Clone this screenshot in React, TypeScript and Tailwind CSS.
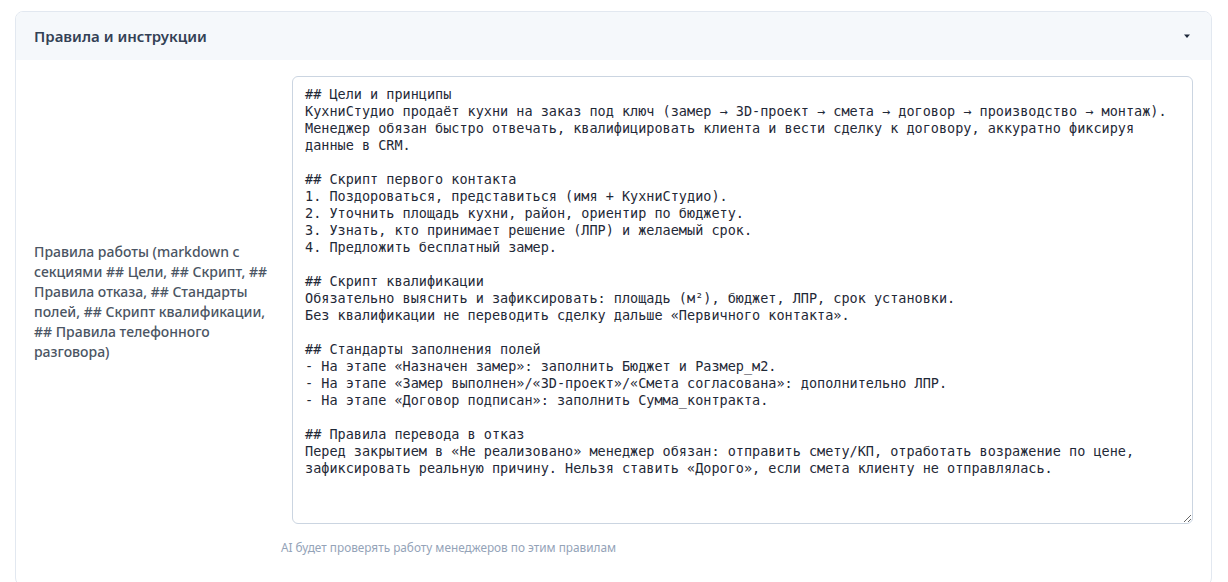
import React from "react";

const RULES = `## Цели и принципы
КухниСтудио продаёт кухни на заказ под ключ (замер → 3D-проект → смета → договор → производство → монтаж).
Менеджер обязан быстро отвечать, квалифицировать клиента и вести сделку к договору, аккуратно фиксируя
данные в CRM.

## Скрипт первого контакта
1. Поздороваться, представиться (имя + КухниСтудио).
2. Уточнить площадь кухни, район, ориентир по бюджету.
3. Узнать, кто принимает решение (ЛПР) и желаемый срок.
4. Предложить бесплатный замер.

## Скрипт квалификации
Обязательно выяснить и зафиксировать: площадь (м²), бюджет, ЛПР, срок установки.
Без квалификации не переводить сделку дальше «Первичного контакта».

## Стандарты заполнения полей
- На этапе «Назначен замер»: заполнить Бюджет и Размер_м2.
- На этапе «Замер выполнен»/«3D-проект»/«Смета согласована»: дополнительно ЛПР.
- На этапе «Договор подписан»: заполнить Сумма_контракта.

## Правила перевода в отказ
Перед закрытием в «Не реализовано» менеджер обязан: отправить смету/КП, отработать возражение по цене,
зафиксировать реальную причину. Нельзя ставить «Дорого», если смета клиенту не отправлялась.`;

export default function App() {
  return (
    <div className="min-h-[582px] bg-white pl-[15px] pr-[16px] pt-[11px] font-['Noto_Sans',sans-serif]">
      <div className="overflow-hidden rounded-[8px] border border-[#e2e8f0] bg-white">
        <div className="flex h-[48px] items-center justify-between bg-[#f5f8fb] pl-[18px] pr-[20px]">
          <h2 className="text-[15px] font-semibold text-[#334155]">Правила и инструкции</h2>
          <svg width="8" height="6" viewBox="0 0 8 6" className="text-[#1e293b]">
            <path d="M1 1.5h6L4 5z" fill="currentColor" />
          </svg>
        </div>
        <div className="flex pb-[30px] pl-[18px] pr-[18px] pt-[16px]">
          <div className="flex w-[247px] shrink-0 items-center pr-[10px] pb-[28px]">
            <p className="text-[14px] leading-[20px] font-medium text-[#4b5563]">
              Правила работы (markdown с секциями ## Цели, ## Скрипт, ## Правила отказа, ## Стандарты полей, ## Скрипт квалификации, ## Правила телефонного разговора)
            </p>
          </div>
          <div className="flex flex-1 flex-col">
            <textarea
              defaultValue={RULES}
              spellCheck={false}
              className="ml-[11px] h-[448px] w-[901px] rounded-[6px] border border-[#cbd5e1] bg-white px-[12px] py-[9px] font-['DejaVu_Sans_Mono',monospace] text-[13.5px] leading-[17px] text-[#1f2937] outline-none"
            />
            <p className="mt-[15px] text-[11.8px] leading-[16px] text-[#94a3b8]">
              AI будет проверять работу менеджеров по этим правилам
            </p>
          </div>
        </div>
      </div>
    </div>
  );
}
